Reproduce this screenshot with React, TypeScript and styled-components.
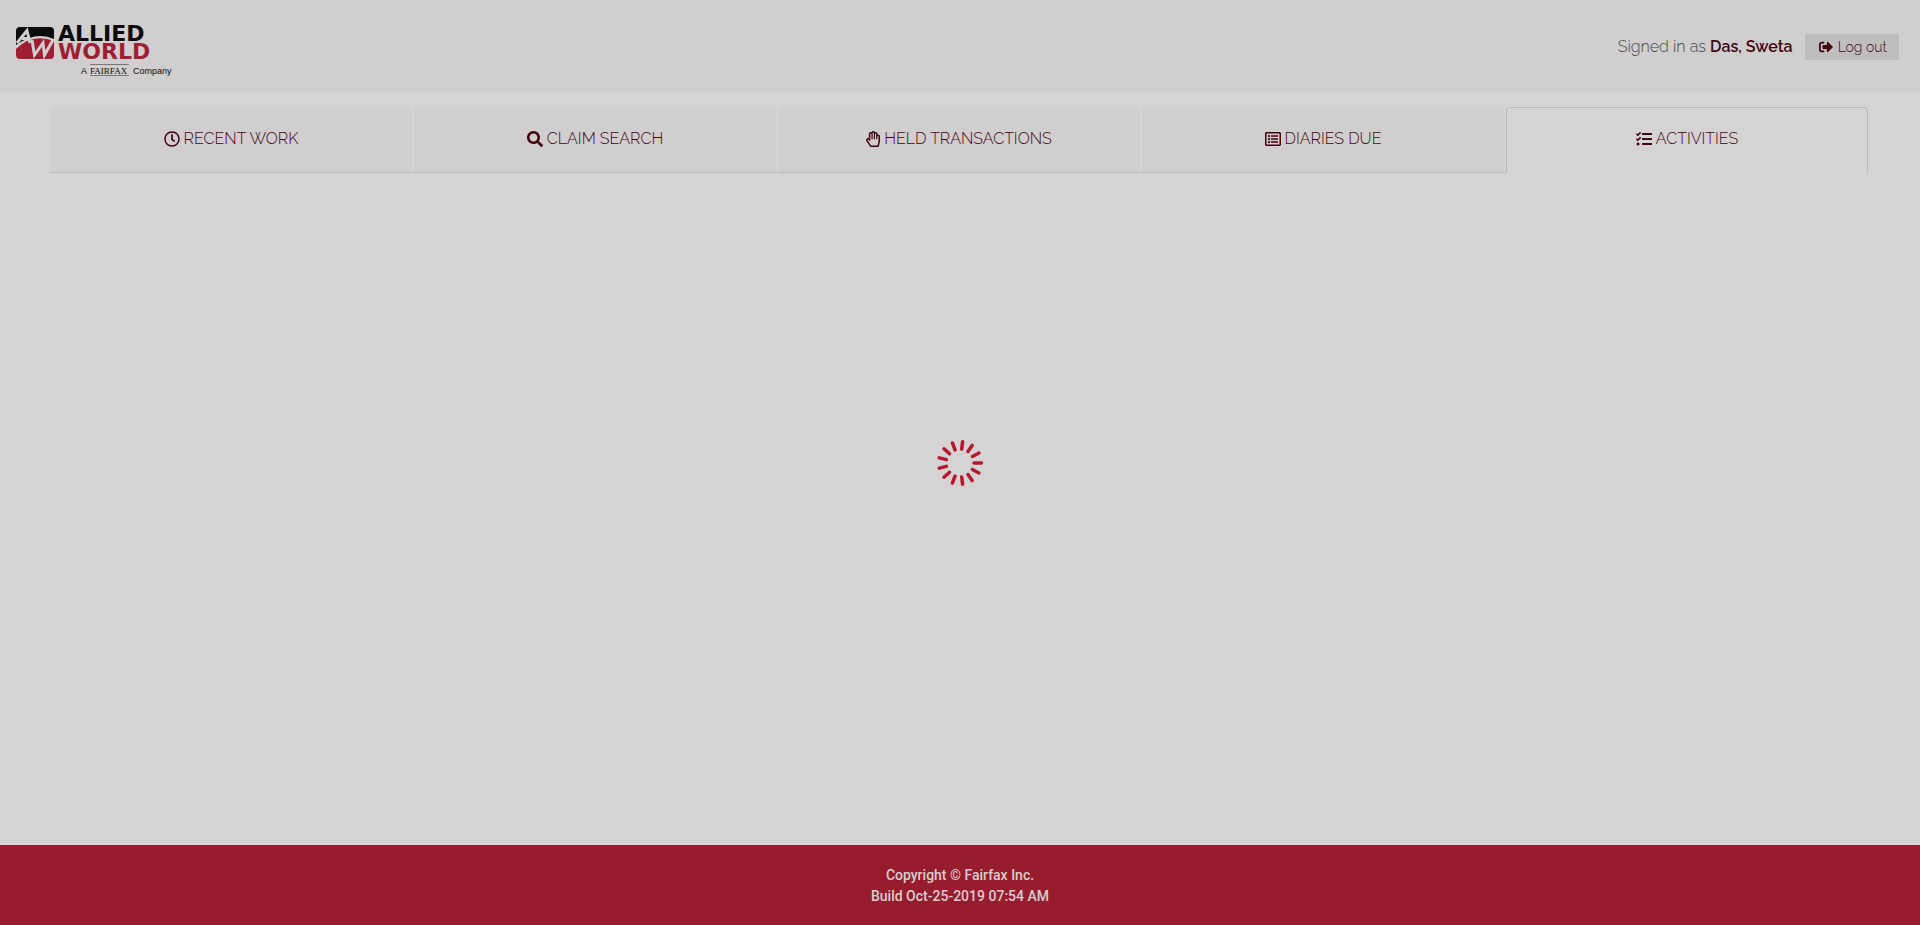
import React from 'react';
import styled, { createGlobalStyle, css } from 'styled-components';
import {
  FaRegClock,
  FaSearch,
  FaRegHandPaper,
  FaRegListAlt,
  FaTasks,
  FaSignOutAlt,
} from 'react-icons/fa';

const colors = {
  page: '#d5d3d3',
  panel: '#d0cece',
  button: '#bfbdbd',
  line: '#b9b9b9',
  maroon: '#42040f',
  brand: '#961c2e',
  spinner: '#b5182f',
  muted: '#45484b',
  footerText: '#d9cdcf',
};

const GlobalStyle = createGlobalStyle`
  *, *::before, *::after { box-sizing: border-box; }
  body {
    margin: 0;
    background: ${colors.page};
    color: ${colors.maroon};
    font-family: Raleway, Lato, sans-serif;
    font-size: 16px;
    font-weight: 300;
    line-height: 24px;
  }
`;

const Page = styled.div`
  display: flex;
  flex-direction: column;
  min-height: 100vh;
`;

const Header = styled.header`
  display: flex;
  align-items: flex-start;
  justify-content: space-between;
  padding: 20px 21px 12px 16px;
  min-height: 92px;
  background: ${colors.panel};
`;

const LogoLink = styled.a`
  display: block;
  line-height: 0;
`;

const UserBar = styled.div`
  display: flex;
  align-items: center;
  gap: 12px;
  padding-top: 14px;
`;

const SignedIn = styled.span`
  color: ${colors.muted};
`;

const UserName = styled.strong`
  color: ${colors.maroon};
  font-weight: 600;
`;

const LogoutButton = styled.button`
  display: flex;
  align-items: center;
  gap: 5px;
  height: 26px;
  padding: 0 12px 0 14px;
  border: 0;
  background: ${colors.button};
  color: ${colors.maroon};
  font: inherit;
  font-size: 14px;
  cursor: pointer;
`;

const Tabs = styled.nav`
  display: grid;
  grid-template-columns: repeat(5, 1fr);
  margin: 15px 50px 0;
`;

const TabCell = styled.div<{ $active?: boolean }>`
  display: flex;
  padding-right: 2px;
  box-shadow: ${({ $active }) => ($active ? 'none' : `inset 0 -1px ${colors.line}`)};
`;

const Tab = styled.a<{ $active?: boolean }>`
  display: flex;
  flex: 1;
  align-items: center;
  justify-content: center;
  gap: 4px;
  height: 66px;
  padding-bottom: 2px;
  border: 1px solid transparent;
  border-radius: 4px 4px 0 0;
  color: ${colors.maroon};
  text-decoration: none;
  text-transform: uppercase;
  ${({ $active }) =>
    $active
      ? css`
          border-color: ${colors.line};
          border-bottom-color: ${colors.page};
        `
      : css`
          background: ${colors.panel};
          border-bottom-color: ${colors.line};
        `}
`;

const IconSlot = styled.span<{ $narrow?: boolean }>`
  display: flex;
  justify-content: center;
  width: ${({ $narrow }) => ($narrow ? '14px' : '16px')};

  svg {
    flex: none;
  }
`;

const Main = styled.main`
  flex: 1;
`;

const LoadingOverlay = styled.div`
  position: fixed;
  inset: 0;
  display: grid;
  place-items: center;
  pointer-events: none;
`;

const Footer = styled.footer`
  padding: 20px 0 18px;
  background: ${colors.brand};
  color: ${colors.footerText};
  font-family: Roboto, sans-serif;
  font-size: 14px;
  font-weight: 500;
  line-height: 21px;
  text-align: center;
`;

const FooterLine = styled.p`
  margin: 0;
`;

function Logo() {
  return (
    <svg width="160" height="60" viewBox="0 -4 160 60" role="img" aria-label="Allied World">
      <path d="M4 3H34Q38 3 38 7V15Q20 7 0 21V7Q0 3 4 3Z" fill="#0b0b0b" />
      <path d="M0 25Q16 9 38 17V31Q38 35 34 35H4Q0 35 0 31Z" fill="#a01e33" />
      <g fill="none" stroke={colors.panel} strokeWidth="3" strokeLinejoin="miter">
        <path d="M1 19L11 6.5L14 19M6 14.5H13" />
        <path d="M16 16L18.5 31L27 19L28.5 31L37 16" />
      </g>
      <g fontFamily="DejaVu Sans, sans-serif" fontWeight="700" fontSize="22">
        <text x="42" y="17" fill="#0b0b0b">ALLIED</text>
        <text x="42" y="35" fill="#a01e33">WORLD</text>
      </g>
      <g fill="#0b0b0b" fontSize="9">
        <text x="65" y="50" fontFamily="Liberation Sans, sans-serif">A</text>
        <text x="74" y="50" fontFamily="Liberation Serif, serif">FAIRFAX</text>
        <text x="117" y="50" fontFamily="Liberation Sans, sans-serif">Company</text>
      </g>
      <path d="M74 40.5H113M74 51.5H113" stroke="#777" strokeWidth="1" />
    </svg>
  );
}

const SPOKES = 13;

function Spinner() {
  return (
    <svg width="48" height="48" viewBox="-24 -24 48 48" role="img" aria-label="Loading">
      {Array.from({ length: SPOKES }, (_, i) => (
        <line
          key={i}
          x1="14"
          x2="21.4"
          y1="0"
          y2="0"
          stroke={colors.spinner}
          strokeWidth="3.5"
          strokeLinecap="round"
          transform={`rotate(${(i * 360) / SPOKES})`}
        />
      ))}
    </svg>
  );
}

const tabs = [
  { label: 'Recent Work', Icon: FaRegClock },
  { label: 'Claim Search', Icon: FaSearch },
  { label: 'Held Transactions', Icon: FaRegHandPaper, narrow: true },
  { label: 'Diaries Due', Icon: FaRegListAlt },
  { label: 'Activities', Icon: FaTasks, active: true },
];

export default function App() {
  return (
    <Page>
      <GlobalStyle />
      <Header>
        <LogoLink href="#home">
          <Logo />
        </LogoLink>
        <UserBar>
          <SignedIn>
            Signed in as <UserName>Das, Sweta</UserName>
          </SignedIn>
          <LogoutButton type="button">
            <FaSignOutAlt size={14} />
            Log out
          </LogoutButton>
        </UserBar>
      </Header>
      <Tabs>
        {tabs.map(({ label, Icon, narrow, active }) => (
          <TabCell key={label} $active={active}>
            <Tab href="#tab" $active={active} aria-current={active ? 'page' : undefined}>
              <IconSlot $narrow={narrow}>
                <Icon size={16} />
              </IconSlot>
              {label}
            </Tab>
          </TabCell>
        ))}
      </Tabs>
      <Main />
      <LoadingOverlay>
        <Spinner />
      </LoadingOverlay>
      <Footer>
        <FooterLine>Copyright © Fairfax Inc.</FooterLine>
        <FooterLine>Build Oct-25-2019 07:54 AM</FooterLine>
      </Footer>
    </Page>
  );
}
